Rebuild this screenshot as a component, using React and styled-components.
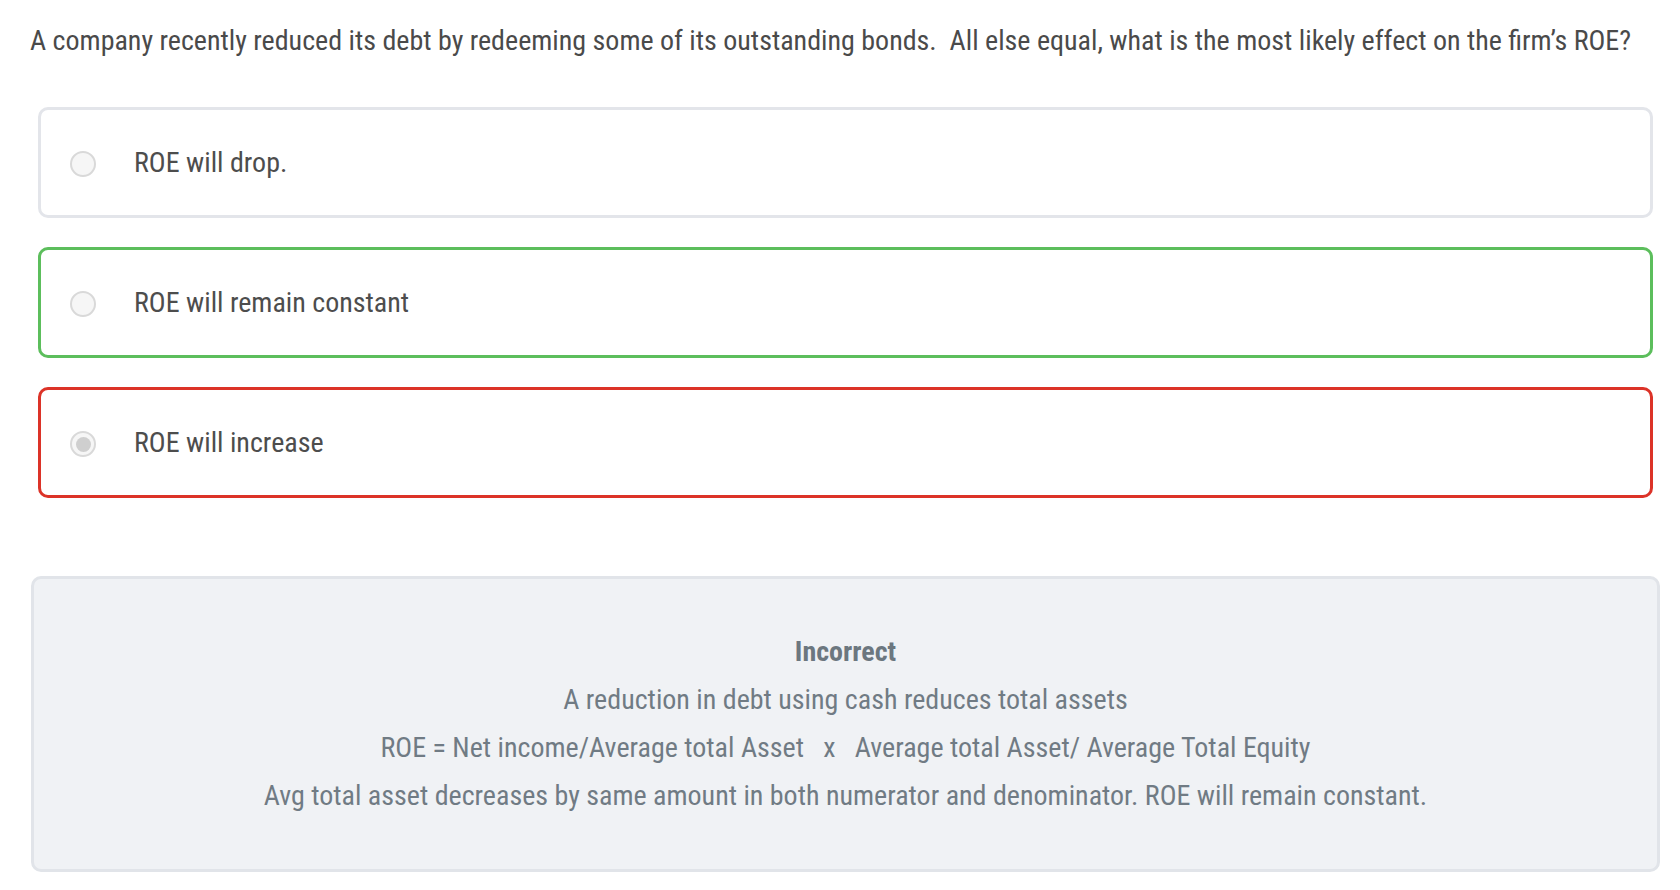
import React from 'react';
import styled, { createGlobalStyle } from 'styled-components';

const GlobalStyle = createGlobalStyle`
  body {
    margin: 0;
    background: #ffffff;
    font-family: "Roboto Condensed", "Liberation Sans Narrow", "DejaVu Sans Condensed", Roboto, sans-serif;
  }
`;

const Page = styled.main`
  padding: 22px 20px 0 31px;
`;

const Question = styled.p`
  margin: 0 0 0 -1px;
  font-size: 28px;
  line-height: 38px;
  color: #4a4a4a;
  white-space: nowrap;
`;

const Options = styled.div`
  margin-top: 47px;
  padding: 0 7px;
  display: flex;
  flex-direction: column;
  gap: 29px;
`;

const borders = {
  neutral: '#e3e5ea',
  correct: '#5cbe5c',
  wrong: '#dc3328',
};

const Option = styled.label`
  box-sizing: border-box;
  height: 111px;
  display: flex;
  align-items: center;
  gap: 38px;
  padding-left: 29px;
  border: 3px solid ${(p) => borders[p.$state]};
  border-radius: 10px;
  background: #fff;
  font-size: 28px;
  color: #4d4d4d;
  cursor: pointer;
`;

const Radio = styled.span`
  box-sizing: border-box;
  width: 26px;
  height: 26px;
  margin-top: 3px;
  flex: none;
  border-radius: 50%;
  border: 2px solid #d9d9d9;
  background: #f6f6f6;
  display: flex;
  align-items: center;
  justify-content: center;

  &::after {
    content: '';
    width: 15px;
    height: 15px;
    border-radius: 50%;
    background: #cfcfcf;
    display: ${(p) => (p.$checked ? 'block' : 'none')};
  }
`;

const Feedback = styled.section`
  box-sizing: border-box;
  margin-top: 78px;
  height: 296px;
  border: 3px solid #e1e4e9;
  border-radius: 10px;
  background: #f0f2f5;
  display: flex;
  flex-direction: column;
  align-items: center;
  justify-content: center;
  font-size: 28px;
  line-height: 48px;
  color: #707b84;
  text-align: center;
`;

const Verdict = styled.strong`
  font-weight: 700;
  color: #6c777f;
`;

const options = [
  { text: 'ROE will drop.', state: 'neutral', checked: false },
  { text: 'ROE will remain constant', state: 'correct', checked: false },
  { text: 'ROE will increase', state: 'wrong', checked: true },
];

export default function App() {
  return (
    <>
      <GlobalStyle />
      <Page>
        <Question>
          A company recently reduced its debt by redeeming some of its outstanding bonds.&nbsp; All else equal, what is the most likely effect on the firm’s ROE?
        </Question>
        <Options>
          {options.map((o) => (
            <Option key={o.text} $state={o.state}>
              <Radio $checked={o.checked} />
              {o.text}
            </Option>
          ))}
        </Options>
        <Feedback>
          <Verdict>Incorrect</Verdict>
          <div>A reduction in debt using cash reduces total assets</div>
          <div>ROE = Net income/Average total Asset &nbsp; x &nbsp; Average total Asset/ Average Total Equity</div>
          <div>Avg total asset decreases by same amount in both numerator and denominator. ROE will remain constant.</div>
        </Feedback>
      </Page>
    </>
  );
}
